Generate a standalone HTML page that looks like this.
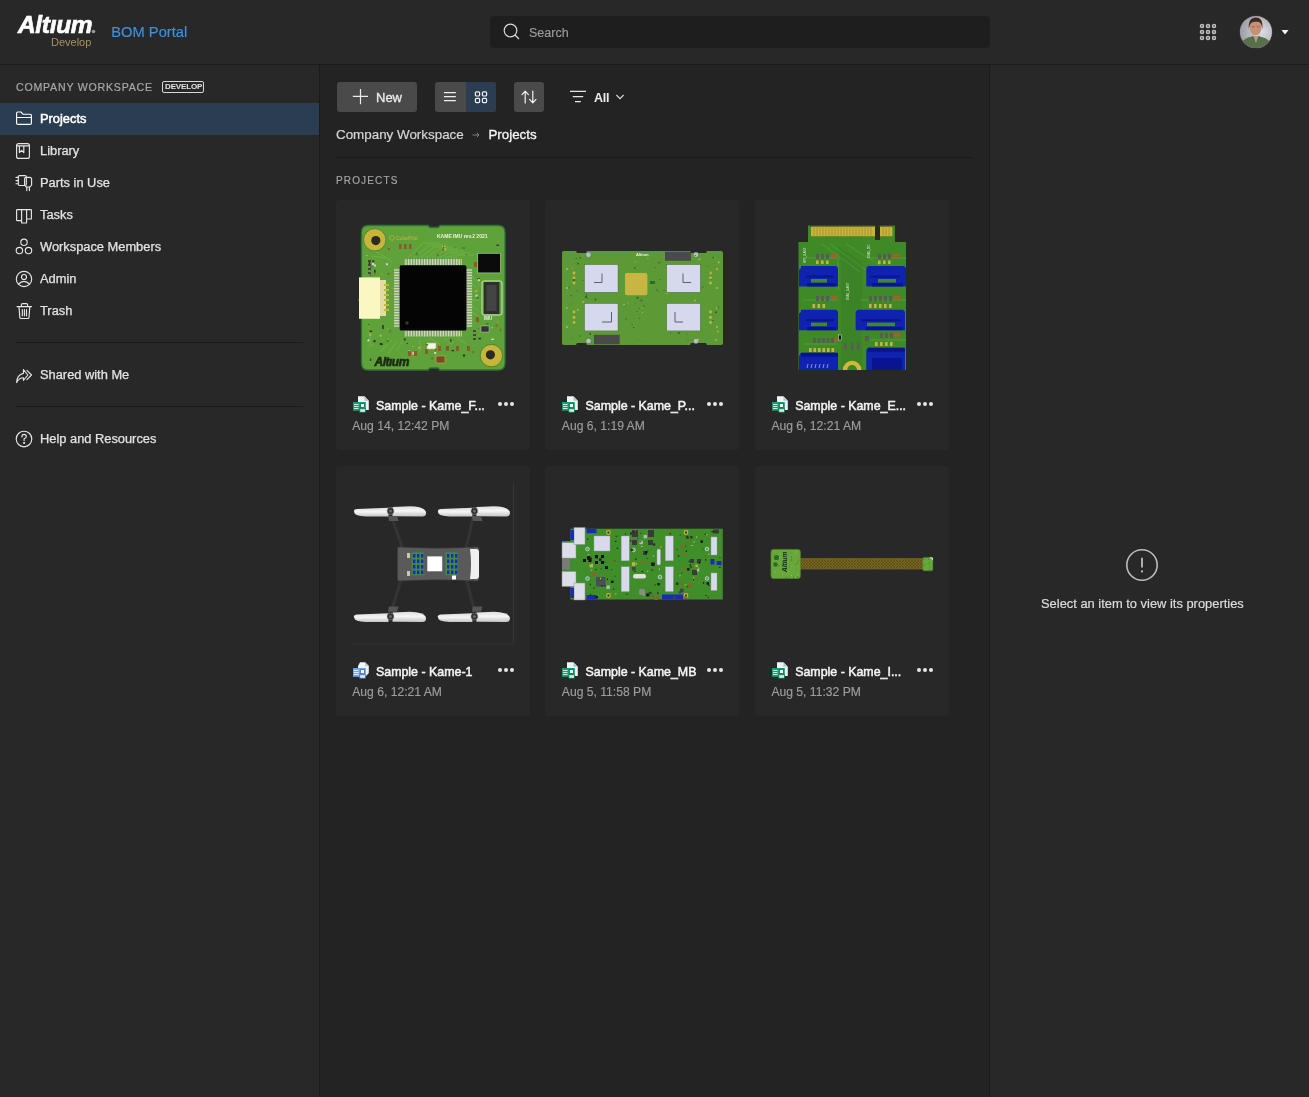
<!DOCTYPE html>
<html><head><meta charset="utf-8">
<style>
*{box-sizing:border-box;margin:0;padding:0}
html,body{width:1309px;height:1097px;overflow:hidden;background:#232323;font-family:"Liberation Sans",sans-serif;color:#e6e6e6}
.a{position:absolute}
body{will-change:transform}
.t{position:absolute;white-space:nowrap;line-height:1}
#hdr{left:0;top:0;width:1309px;height:64px;background:#282828}
#hline{left:0;top:64px;width:1309px;height:1px;background:#1b1b1b}
#side{left:0;top:65px;width:319px;height:1032px;background:#282828}
#sline{left:319px;top:65px;width:1px;height:1032px;background:#1b1b1b}
#main{left:320px;top:65px;width:669px;height:1032px;background:#232323}
#rline{left:989px;top:65px;width:1px;height:1032px;background:#1b1b1b}
#right{left:990px;top:65px;width:319px;height:1032px;background:#282828}
.nav{font-size:12.85px;color:#e4e4e4;left:40px;-webkit-text-stroke:0.25px #e4e4e4}
.ico{position:absolute;left:16px}
.card{position:absolute;width:194px;height:250px;background:#282828;border-radius:4px}
.ct{position:absolute;left:40.4px;font-size:12.4px;font-weight:400;color:#f4f4f4;-webkit-text-stroke:0.5px #f4f4f4;line-height:1;white-space:nowrap}
.cd{position:absolute;left:16.6px;font-size:12.15px;color:#9d9d9d;-webkit-text-stroke:0.15px #9d9d9d;line-height:1;white-space:nowrap}
</style></head><body>
<div class="a" id="hdr"></div>
<div class="a" id="hline"></div>
<div class="a" id="side"></div>
<div class="a" id="sline"></div>
<div class="a" id="main"></div>
<div class="a" id="rline"></div>
<div class="a" id="right"></div>

<!-- HEADER -->
<div class="t" style="left:17.5px;top:13.2px;font-size:24px;font-weight:700;font-style:italic;color:#fff;letter-spacing:-0.3px;-webkit-text-stroke:0.7px #fff;transform-origin:0 0;transform:scaleX(1.02)">Altıum</div>
<svg class="a" style="left:91px;top:29px" width="5" height="5" viewBox="0 0 5 5"><circle cx="2.5" cy="2.5" r="1.8" fill="#9a9a9a"/></svg>
<div class="t" style="left:51px;top:37px;font-size:11px;color:#a89262">Develop</div>
<div class="t" style="left:111.3px;top:24.8px;font-size:14.7px;color:#3f90e0;-webkit-text-stroke:0.15px #3f90e0">BOM Portal</div>
<div class="a" style="left:490px;top:16px;width:500px;height:32px;background:#1e1e1e;border-radius:4px"></div>
<svg class="a" style="left:500px;top:21px" width="22" height="22" viewBox="0 0 22 22"><circle cx="10.5" cy="9.5" r="6.3" fill="none" stroke="#d8d8d8" stroke-width="1.2"/><line x1="15" y1="14" x2="19" y2="18" stroke="#d8d8d8" stroke-width="1.3"/></svg>
<div class="t" style="left:529px;top:26.8px;font-size:12.5px;color:#9c9c9c;-webkit-text-stroke:0.15px #9c9c9c">Search</div>


<svg class="a" style="left:1198px;top:22px" width="20" height="20" viewBox="0 0 20 20">
<g fill="#7c7c7c" stroke="#c6c6c6" stroke-width="1.1">
<circle cx="4" cy="4" r="1.7"/><circle cx="10" cy="4" r="1.7"/><circle cx="16" cy="4" r="1.7"/>
<circle cx="4" cy="10" r="1.7"/><circle cx="10" cy="10" r="1.7"/><circle cx="16" cy="10" r="1.7"/>
<circle cx="4" cy="16" r="1.7"/><circle cx="10" cy="16" r="1.7"/><circle cx="16" cy="16" r="1.7"/>
</g></svg>
<svg class="a" style="left:1239px;top:15px" width="34" height="34" viewBox="0 0 34 34">
<defs><radialGradient id="avbg" cx="0.68" cy="0.5" r="0.6"><stop offset="0" stop-color="#dcdee4"/><stop offset="1" stop-color="#9ea2aa"/></radialGradient>
<clipPath id="avc"><circle cx="17" cy="17" r="16.1"/></clipPath></defs>
<g clip-path="url(#avc)">
<rect width="34" height="34" fill="url(#avbg)"/>
<path d="M0 31 C3 25 8 22.5 13 21.5 H20.5 C26 22.5 31 25 34 31 V34 H0 Z" fill="#56704a"/>
<path d="M13.5 21 H19.8 L17 28.5 Z" fill="#b89a84"/>
<path d="M12.8 21.5 L17 29 L14.5 21.5 Z M20.8 21.5 L17 29 L19.4 21.5 Z" fill="#4a6240"/>
<ellipse cx="16.6" cy="12.6" rx="6" ry="7.6" fill="#c98f74"/>
<path d="M9.8 14 C9.2 6 12 2.6 16.8 2.6 C21.4 2.6 24 5.6 23.4 14 C22.8 10.5 22 8 20.5 7.2 C18 6.6 14.5 6.8 12.5 7.8 C11 9 10.4 11 9.8 14 Z" fill="#3a2c24"/>
<path d="M12.8 11.8 H15.6 M17.8 11.8 H20.6" stroke="#7a5444" stroke-width="0.8"/>
</g>
<circle cx="17" cy="17" r="16.1" fill="none" stroke="#c06058" stroke-width="0.5" stroke-dasharray="1 1" opacity="0.8"/>
</svg>
<svg class="a" style="left:1281px;top:29px" width="8" height="7" viewBox="0 0 8 7"><path d="M0.5 1 L7.5 1 L4 5.5 Z" fill="#f4f4f4"/></svg>


<!-- SIDEBAR -->
<div class="t" style="left:16px;top:82.4px;font-size:10.6px;color:#a8a8a8;letter-spacing:0.78px;-webkit-text-stroke:0.2px #a8a8a8">COMPANY WORKSPACE</div>
<div class="a" style="left:162px;top:81px;width:42px;height:12px;border:1px solid #d8d8d8;border-radius:2px"></div>
<div class="t" style="left:165px;top:83.1px;font-size:8px;font-weight:700;color:#e4e4e4;letter-spacing:-0.15px">DEVELOP</div>
<div class="a" style="left:0;top:103px;width:319px;height:32px;background:#2b3d50"></div>
<svg class="a" style="left:0;top:0" width="40" height="460" viewBox="0 0 40 460" fill="none" stroke="#e6e6e6" stroke-width="1.15" stroke-linejoin="round" stroke-linecap="round">
<path d="M16.6 113.2 Q16.6 112 17.8 112 H21 L22.9 114.2 H30.2 Q31.4 114.2 31.4 115.4 V123.2 Q31.4 124.4 30.2 124.4 H17.8 Q16.6 124.4 16.6 123.2 Z M16.6 117.5 H31.4" stroke="#ffffff"/>
<rect x="16.6" y="143.6" width="12.8" height="14.8" rx="2"/>
<path d="M16.6 145.8 H29.4 M19.4 145.8 V152.6 L21.6 150.4 L23.8 152.6 V145.8"/>
<rect x="18.3" y="175.6" width="8" height="9.9" rx="1.2"/>
<path d="M16 177.4 H18.3 M16 180.6 H18.3 M16 183.7 H18.3"/>
<path d="M26 177.3 H29.6 Q31.6 177.3 31.6 179.3 V185 L30 187 H26.2 L24.6 185 V178.8 Q24.6 177.3 26 177.3 Z" />
<path d="M26.8 187 V190.6 M29.4 187 V190.6"/>
<path d="M17.2 209.6 H30.8 Q31.4 209.6 31.4 210.2 V218.4 Q31.4 219 30.8 219 H26.6 M16.6 210.2 Q16.6 209.6 17.2 209.6 M16.6 210.2 V220 Q16.6 220.6 17.2 220.6 H21.4 M21.6 209.6 V222.4 Q21.6 223 22.2 223 H26 Q26.6 223 26.6 222.4 V209.6"/>
<circle cx="24" cy="242.3" r="3.2"/>
<circle cx="19.4" cy="250.5" r="3.2"/>
<circle cx="28.5" cy="250.5" r="3.2"/>
<circle cx="24" cy="279" r="7.7"/>
<circle cx="24" cy="277" r="2.5"/>
<path d="M18.6 284 Q21 281.3 24 281.3 Q27 281.3 29.4 284"/>
<path d="M17 306.6 H31.6 M21.4 306.6 V304.8 Q21.4 303.6 22.6 303.6 H26.4 Q27.6 303.6 27.6 304.8 V306.6 M19 306.6 L19.8 317.4 Q19.9 318.5 21 318.5 H27.8 Q28.9 318.5 29 317.4 L29.8 306.6 M22.3 309.6 V315.8 M24.4 309.6 V315.8 M26.5 309.6 V315.8"/>
<path d="M23.4 369.6 L27.9 375 L23.4 380.3 V377.7 Q19.2 377.5 16.6 382.6 Q17 374.8 23.4 373.4 Z" stroke-width="1.1"/>
<path d="M26.9 370.4 L31.5 375 L26.9 379.6" stroke-width="1.1"/>
<circle cx="24" cy="439" r="7.8"/>
<path d="M21.9 436.9 Q21.9 434.4 24.1 434.4 Q26.3 434.4 26.3 436.5 Q26.3 437.9 24.1 438.8 V440.6"/>
<circle cx="24.1" cy="443" r="0.5" fill="#e6e6e6"/>
</svg>
<div class="t nav" style="top:113.1px;color:#ffffff;-webkit-text-stroke:0.5px #ffffff">Projects</div>
<div class="t nav" style="top:144.9px">Library</div>
<div class="t nav" style="top:176.9px">Parts in Use</div>
<div class="t nav" style="top:208.9px">Tasks</div>
<div class="t nav" style="top:240.9px">Workspace Members</div>
<div class="t nav" style="top:272.9px">Admin</div>
<div class="t nav" style="top:304.9px">Trash</div>
<div class="a" style="left:16px;top:342px;width:287px;height:1px;background:#1b1b1b"></div>
<div class="t nav" style="top:368.9px">Shared with Me</div>
<div class="a" style="left:16px;top:406px;width:287px;height:1px;background:#1b1b1b"></div>
<div class="t nav" style="top:432.9px">Help and Resources</div>


<!-- TOOLBAR -->
<div class="a" style="left:337px;top:82px;width:80px;height:30px;background:#4a4a4a;border-radius:3px"></div>
<svg class="a" style="left:352px;top:88px" width="17" height="17" viewBox="0 0 17 17"><path d="M8.5 1 V16.2 M0.8 8.4 H16" stroke="#ececec" stroke-width="1.2" fill="none"/></svg>
<div class="t" style="left:376px;top:90.8px;font-size:13px;color:#ededed;-webkit-text-stroke:0.3px #ededed">New</div>
<div class="a" style="left:435px;top:82px;width:61px;height:30px;background:#4a4a4a;border-radius:3px;overflow:hidden"><div class="a" style="left:30.5px;top:0;width:30.5px;height:30px;background:#2b3d50"></div></div>
<svg class="a" style="left:435px;top:82px" width="61" height="30" viewBox="0 0 61 30" fill="none" stroke="#f0f0f0" stroke-width="1.2">
<path d="M9 10.6 H20.8 M9 14.6 H20.8 M9 18.6 H20.8"/>
<rect x="40.4" y="9.8" width="4.2" height="4.2" rx="1"/><rect x="47.4" y="9.8" width="4.2" height="4.2" rx="1"/>
<rect x="40.4" y="16.4" width="4.2" height="4.2" rx="1"/><rect x="47.4" y="16.4" width="4.2" height="4.2" rx="1"/>
</svg>
<div class="a" style="left:514px;top:82px;width:30px;height:30px;background:#4a4a4a;border-radius:3px"></div>
<svg class="a" style="left:514px;top:82px" width="30" height="30" viewBox="0 0 30 30" fill="none" stroke="#f2f2f2" stroke-width="1.2" stroke-linecap="round" stroke-linejoin="round">
<path d="M11.2 21 V9.4 M8 12.6 L11.2 9.2 L14.4 12.6"/>
<path d="M18.8 9 V20.6 M15.6 17.4 L18.8 20.8 L22 17.4"/>
</svg>
<svg class="a" style="left:568px;top:88px" width="20" height="16" viewBox="0 0 20 16" fill="none" stroke="#e6e6e6" stroke-width="1.2">
<path d="M2 3.4 H18 M4.8 8.6 H15.2 M7 13.6 H12.8"/>
</svg>
<div class="t" style="left:594px;top:92px;font-size:12.5px;font-weight:700;color:#eeeeee;letter-spacing:-0.3px">All</div>
<svg class="a" style="left:614px;top:92px" width="12" height="10" viewBox="0 0 12 10" fill="none" stroke="#dedede" stroke-width="1.1"><path d="M2.4 3 L6 6.6 L9.6 3"/></svg>

<!-- BREADCRUMB -->
<div class="t" style="left:336px;top:128px;font-size:13.4px;color:#d6d6d6;-webkit-text-stroke:0.2px #d6d6d6">Company Workspace</div>
<svg class="a" style="left:471px;top:131px" width="10" height="8" viewBox="0 0 10 8" fill="none" stroke="#8a8a8a" stroke-width="0.9"><path d="M1.5 4 H8 M5.8 1.8 L8 4 L5.8 6.2"/></svg>
<div class="t" style="left:488.5px;top:128px;font-size:13.3px;color:#f4f4f4;-webkit-text-stroke:0.35px #f4f4f4">Projects</div>
<div class="a" style="left:336px;top:157px;width:637px;height:1px;background:#1b1b1b"></div>
<div class="t" style="left:336px;top:175.9px;font-size:10px;color:#a3a3a3;letter-spacing:1.15px;-webkit-text-stroke:0.2px #a3a3a3">PROJECTS</div>

<!-- RIGHT PANEL -->
<svg class="a" style="left:1125px;top:548px" width="34" height="34" viewBox="0 0 34 34" fill="none" stroke="#bdbdbd" stroke-width="1.6"><circle cx="17" cy="17" r="15.2"/><path d="M17 9.8 V19.4" stroke-width="1.8"/><circle cx="17" cy="23.4" r="1.1" fill="#bdbdbd" stroke="none"/></svg>
<div class="t" style="left:1041px;top:598.2px;font-size:12.9px;color:#dcdcdc;-webkit-text-stroke:0.2px #dcdcdc">Select an item to view its properties</div>


<!-- CARDS -->
<div class="card" style="left:335.6px;top:200px"><div class="ct" style="top:199.9px">Sample - Kame_F...</div><div class="cd" style="top:219.6px">Aug 14, 12:42 PM</div></div>
<svg class="a" style="left:352.7px;top:396px" width="17" height="17" viewBox="0 0 17 17">
<path d="M5 0.3 H11.4 L15.8 4.7 V14 H5 Z" fill="#eef6fc"/><path d="M11.4 0.3 L15.8 4.7 H11.4 Z" fill="#b0c4d6"/>
<rect x="0" y="6" width="12.8" height="8.8" fill="#10a070"/>
<path d="M1 8.5 H5.6 M1 10.5 H5.6 M1 12.5 H5.6" stroke="#ffffff" stroke-width="0.8"/>
<rect x="7.4" y="7.6" width="4" height="3.8" fill="#fff4f8" stroke="#06704a" stroke-width="0.8"/>
<rect x="6.8" y="12.8" width="5.6" height="3.4" fill="#cfeee0" stroke="#06704a" stroke-width="0.7"/>
</svg>
<svg class="a" style="left:496.00px;top:400px" width="20" height="8" viewBox="0 0 20 8" fill="#e6e6e6"><circle cx="4" cy="4" r="2.05"/><circle cx="10" cy="4" r="2.05"/><circle cx="16" cy="4" r="2.05"/></svg>
<div class="card" style="left:545.2px;top:200px"><div class="ct" style="top:199.9px">Sample - Kame_P...</div><div class="cd" style="top:219.6px">Aug 6, 1:19 AM</div></div>
<svg class="a" style="left:561.7px;top:396px" width="17" height="17" viewBox="0 0 17 17">
<path d="M5 0.3 H11.4 L15.8 4.7 V14 H5 Z" fill="#eef6fc"/><path d="M11.4 0.3 L15.8 4.7 H11.4 Z" fill="#b0c4d6"/>
<rect x="0" y="6" width="12.8" height="8.8" fill="#10a070"/>
<path d="M1 8.5 H5.6 M1 10.5 H5.6 M1 12.5 H5.6" stroke="#ffffff" stroke-width="0.8"/>
<rect x="7.4" y="7.6" width="4" height="3.8" fill="#fff4f8" stroke="#06704a" stroke-width="0.8"/>
<rect x="6.8" y="12.8" width="5.6" height="3.4" fill="#cfeee0" stroke="#06704a" stroke-width="0.7"/>
</svg>
<svg class="a" style="left:705.33px;top:400px" width="20" height="8" viewBox="0 0 20 8" fill="#e6e6e6"><circle cx="4" cy="4" r="2.05"/><circle cx="10" cy="4" r="2.05"/><circle cx="16" cy="4" r="2.05"/></svg>
<div class="card" style="left:754.8px;top:200px"><div class="ct" style="top:199.9px">Sample - Kame_E...</div><div class="cd" style="top:219.6px">Aug 6, 12:21 AM</div></div>
<svg class="a" style="left:771.7px;top:396px" width="17" height="17" viewBox="0 0 17 17">
<path d="M5 0.3 H11.4 L15.8 4.7 V14 H5 Z" fill="#eef6fc"/><path d="M11.4 0.3 L15.8 4.7 H11.4 Z" fill="#b0c4d6"/>
<rect x="0" y="6" width="12.8" height="8.8" fill="#10a070"/>
<path d="M1 8.5 H5.6 M1 10.5 H5.6 M1 12.5 H5.6" stroke="#ffffff" stroke-width="0.8"/>
<rect x="7.4" y="7.6" width="4" height="3.8" fill="#fff4f8" stroke="#06704a" stroke-width="0.8"/>
<rect x="6.8" y="12.8" width="5.6" height="3.4" fill="#cfeee0" stroke="#06704a" stroke-width="0.7"/>
</svg>
<svg class="a" style="left:914.67px;top:400px" width="20" height="8" viewBox="0 0 20 8" fill="#e6e6e6"><circle cx="4" cy="4" r="2.05"/><circle cx="10" cy="4" r="2.05"/><circle cx="16" cy="4" r="2.05"/></svg>
<div class="card" style="left:335.6px;top:466px"><div class="ct" style="top:199.9px">Sample - Kame-1</div><div class="cd" style="top:219.6px">Aug 6, 12:21 AM</div></div>
<svg class="a" style="left:352.7px;top:662px" width="17" height="17" viewBox="0 0 17 17">
<path d="M7 0.3 H12 L15.8 4 V11 L12.6 14.5 H5 V4 Z" fill="#eef6fc"/><path d="M12 0.3 L15.8 4 L12 4.5 Z" fill="#c0d0e0"/>
<rect x="0" y="6" width="12.8" height="8.8" fill="#68a8e6"/>
<path d="M1 8.5 H5.6 M1 10.5 H5.6 M1 12.5 H5.6" stroke="#ffffff" stroke-width="0.8"/>
<rect x="7.4" y="7.6" width="4" height="3.8" fill="#fff4f8" stroke="#3a70b8" stroke-width="0.8"/>
<rect x="6.8" y="12.8" width="5.6" height="3.4" fill="#dde8f8" stroke="#3a70b8" stroke-width="0.7"/>
</svg>
<svg class="a" style="left:496.00px;top:666px" width="20" height="8" viewBox="0 0 20 8" fill="#e6e6e6"><circle cx="4" cy="4" r="2.05"/><circle cx="10" cy="4" r="2.05"/><circle cx="16" cy="4" r="2.05"/></svg>
<div class="card" style="left:545.2px;top:466px"><div class="ct" style="top:199.9px">Sample - Kame_MB</div><div class="cd" style="top:219.6px">Aug 5, 11:58 PM</div></div>
<svg class="a" style="left:561.7px;top:662px" width="17" height="17" viewBox="0 0 17 17">
<path d="M5 0.3 H11.4 L15.8 4.7 V14 H5 Z" fill="#eef6fc"/><path d="M11.4 0.3 L15.8 4.7 H11.4 Z" fill="#b0c4d6"/>
<rect x="0" y="6" width="12.8" height="8.8" fill="#10a070"/>
<path d="M1 8.5 H5.6 M1 10.5 H5.6 M1 12.5 H5.6" stroke="#ffffff" stroke-width="0.8"/>
<rect x="7.4" y="7.6" width="4" height="3.8" fill="#fff4f8" stroke="#06704a" stroke-width="0.8"/>
<rect x="6.8" y="12.8" width="5.6" height="3.4" fill="#cfeee0" stroke="#06704a" stroke-width="0.7"/>
</svg>
<svg class="a" style="left:705.33px;top:666px" width="20" height="8" viewBox="0 0 20 8" fill="#e6e6e6"><circle cx="4" cy="4" r="2.05"/><circle cx="10" cy="4" r="2.05"/><circle cx="16" cy="4" r="2.05"/></svg>
<div class="card" style="left:754.8px;top:466px"><div class="ct" style="top:199.9px">Sample - Kame_I...</div><div class="cd" style="top:219.6px">Aug 5, 11:32 PM</div></div>
<svg class="a" style="left:771.7px;top:662px" width="17" height="17" viewBox="0 0 17 17">
<path d="M5 0.3 H11.4 L15.8 4.7 V14 H5 Z" fill="#eef6fc"/><path d="M11.4 0.3 L15.8 4.7 H11.4 Z" fill="#b0c4d6"/>
<rect x="0" y="6" width="12.8" height="8.8" fill="#10a070"/>
<path d="M1 8.5 H5.6 M1 10.5 H5.6 M1 12.5 H5.6" stroke="#ffffff" stroke-width="0.8"/>
<rect x="7.4" y="7.6" width="4" height="3.8" fill="#fff4f8" stroke="#06704a" stroke-width="0.8"/>
<rect x="6.8" y="12.8" width="5.6" height="3.4" fill="#cfeee0" stroke="#06704a" stroke-width="0.7"/>
</svg>
<svg class="a" style="left:914.67px;top:666px" width="20" height="8" viewBox="0 0 20 8" fill="#e6e6e6"><circle cx="4" cy="4" r="2.05"/><circle cx="10" cy="4" r="2.05"/><circle cx="16" cy="4" r="2.05"/></svg>
<svg class="a" style="left:0;top:0" width="1309" height="1097" viewBox="0 0 1309 1097">
<!-- PCB 1: Kame_F IMU board -->
<g>
<path d="M368 225.5 H428 L430 227.5 H438 L440 225.5 H498 Q505 225.5 505 232.5 V363 Q505 370 498 370 H440 L438 368 H430 L428 370 H368 Q361.5 370 361.5 363 V232.5 Q361.5 225.5 368 225.5 Z" fill="#5fa23a" stroke="#2f7434" stroke-width="1.3"/>
<g stroke="#78b84c" stroke-width="0.7" fill="none" opacity="0.9">
<path d="M408 258 L423 243 H440 M414 258 L429 245 H446 M420 258 L434 247 H452 M426 258 L439 249 H458 M432 258 L444 251 H464 M438 258 L449 253 H470 M444 258 L454 255 H474 M450 258 L458 257"/>
<path d="M472 276 L480 286 M472 282 L478 290 M472 300 H481 M472 306 L478 310 M472 312 L480 318"/>
<path d="M392 340 L380 352 M398 340 L388 354 M404 338 L396 352 M420 340 V352 M430 338 L440 344 M444 338 L452 344 M458 338 L466 344"/>
<path d="M368 326 Q372 334 370 346 M366 300 H358 M372 256 L386 258 M370 250 Q380 252 392 262"/>
</g>
<circle cx="374.8" cy="239.8" r="11.2" fill="#c8b63a" stroke="#3a7a34" stroke-width="0.8"/>
<circle cx="375.8" cy="240.6" r="4.6" fill="#2a2a22"/>
<circle cx="491.4" cy="355.6" r="11.2" fill="#c8b63a" stroke="#3a7a34" stroke-width="0.8"/>
<circle cx="490.4" cy="354.8" r="4.6" fill="#2a2a22"/>
<polygon points="392,235.5 394.2,236.7 394.2,239.3 392,240.5 389.8,239.3 389.8,236.7" fill="none" stroke="#c8b63a" stroke-width="0.6"/><text x="396" y="240" font-size="5" fill="#c8b63a" font-family="Liberation Sans">CubePilot</text>
<text x="437" y="238" font-size="5" fill="#f0f0e0" font-family="Liberation Sans" font-weight="700">KAME IMU rev.2 2021</text>
<defs>
<pattern id="pinv" width="1.6" height="6" patternUnits="userSpaceOnUse"><rect width="1.6" height="6" fill="#5a9a38"/><rect width="0.9" height="6" fill="#dcdccc"/></pattern>
<pattern id="pinh" width="6" height="1.6" patternUnits="userSpaceOnUse"><rect width="6" height="1.6" fill="#5a9a38"/><rect width="6" height="0.9" fill="#dcdccc"/></pattern>
</defs>
<rect x="404" y="259" width="58" height="6.2" fill="url(#pinv)"/>
<rect x="404" y="330.5" width="58" height="6" fill="url(#pinv)"/>
<rect x="394" y="268.6" width="5.7" height="58.4" fill="url(#pinh)"/>
<rect x="466.4" y="268.6" width="5.7" height="58.4" fill="url(#pinh)"/>
<rect x="399.7" y="265.2" width="66.7" height="65.3" rx="1.5" fill="#040404"/>
<circle cx="407" cy="323" r="1.8" fill="#333"/>
<rect x="359" y="277.4" width="21" height="41.4" fill="#fbf7c2"/>
<rect x="380" y="280" width="6" height="36" fill="#e4dca4"/>
<g fill="#c9b23a"><rect x="384" y="284" width="5" height="2"/><rect x="384" y="289" width="5" height="2"/><rect x="384" y="294" width="5" height="2"/><rect x="384" y="299" width="5" height="2"/><rect x="384" y="304" width="5" height="2"/><rect x="384" y="309" width="5" height="2"/></g>
<rect x="477.8" y="253.3" width="22.6" height="19.6" fill="#0b0b0b" stroke="#d8e8c8" stroke-width="0.5"/>
<rect x="482" y="281" width="20" height="34" rx="2" fill="none" stroke="#e8f0d8" stroke-width="0.8"/>
<rect x="483.8" y="282" width="15.6" height="32" fill="#2e2e2e"/>
<rect x="486.5" y="285" width="10" height="26" fill="#444"/>
<text x="484" y="320" font-size="4.5" fill="#f0f0e0" font-family="Liberation Sans" font-weight="700">IMU</text>
<rect x="481" y="326" width="8" height="6" fill="#333" stroke="#ddd" stroke-width="0.4"/>
<g fill="#8a5a2a"><rect x="399" y="244" width="2.5" height="5"/><rect x="404" y="244" width="2.5" height="5"/><rect x="409" y="244" width="2.5" height="5"/><rect x="425" y="349" width="3" height="5"/><rect x="438" y="346" width="3" height="5"/><rect x="446" y="346" width="3" height="5"/><rect x="456" y="346" width="3" height="5"/><rect x="467" y="346" width="3" height="5"/><rect x="408" y="351" width="3" height="5"/><rect x="414" y="351" width="3" height="5"/><rect x="476" y="317" width="3" height="5"/><rect x="474" y="262" width="3" height="5"/></g>
<g fill="#444"><rect x="368" y="260" width="3" height="2"/><rect x="368" y="264" width="3" height="2"/><rect x="368" y="268" width="3" height="2"/><rect x="368" y="272" width="3" height="2"/><rect x="473" y="330" width="3" height="2"/><rect x="473" y="334" width="3" height="2"/><rect x="473" y="338" width="3" height="2"/><rect x="382" y="325" width="2" height="4"/></g>
<rect x="427" y="343" width="9" height="6" fill="#f4f4f4" stroke="#c9b23a" stroke-width="0.6"/>
<rect x="436" y="356" width="9" height="7" fill="#7a4a28" stroke="#c9b23a" stroke-width="0.6"/>
<text x="374.5" y="366" font-size="12" font-style="italic" font-weight="700" fill="#1c2a14" stroke="#1c2a14" stroke-width="0.6" font-family="Liberation Sans" letter-spacing="-0.5">Altıum</text>
</g>
<!-- PCB 1b: texture -->
<g>
<rect x="478.4" y="337.9" width="2.6" height="1.4" fill="#2a2a2a"/><rect x="372.0" y="263.0" width="2" height="2" fill="#d8d8c8"/><rect x="442.5" y="245.6" width="2.6" height="1.4" fill="#d8d8c8"/><rect x="386.5" y="340.5" width="2.6" height="1.4" fill="#3a7a30"/><rect x="496.3" y="244.6" width="2.6" height="1.4" fill="#3a3a3a"/><rect x="406.8" y="343.0" width="1" height="1" fill="#2a2a2a"/><rect x="367.4" y="339.3" width="2" height="2" fill="#d8d8c8"/><rect x="443.1" y="245.1" width="1.4" height="2.6" fill="#2a2a2a"/><rect x="381.1" y="273.8" width="1" height="1" fill="#c9b23a"/><rect x="434.2" y="352.0" width="2" height="2" fill="#d8d8c8"/><rect x="379.6" y="334.6" width="2" height="2" fill="#c9b23a"/><rect x="369.9" y="358.4" width="1.4" height="2.6" fill="#3a3a3a"/><rect x="369.3" y="333.6" width="2" height="2" fill="#c9b23a"/><rect x="497.2" y="321.2" width="1" height="1" fill="#c9b23a"/><rect x="450.1" y="339.3" width="1.4" height="2.6" fill="#3a3a3a"/><rect x="380.2" y="343.5" width="2.6" height="1.4" fill="#2a2a2a"/><rect x="373.5" y="340.2" width="2" height="2" fill="#2a2a2a"/><rect x="444.3" y="248.2" width="2" height="2" fill="#c9b23a"/><rect x="443.4" y="245.4" width="2" height="2" fill="#c9b23a"/><rect x="412.3" y="346.0" width="1" height="1" fill="#c9b23a"/><rect x="391.8" y="287.8" width="1" height="1" fill="#c9b23a"/><rect x="388.2" y="338.4" width="1" height="1" fill="#c9b23a"/><rect x="462.3" y="247.3" width="2.6" height="1.4" fill="#3a7a30"/><rect x="372.3" y="260.2" width="2" height="2" fill="#3a3a3a"/><rect x="475.5" y="294.7" width="2" height="2" fill="#d8d8c8"/><rect x="412.4" y="352.1" width="1.4" height="2.6" fill="#d8d8c8"/><rect x="408.9" y="350.1" width="1" height="1" fill="#d8d8c8"/><rect x="368.2" y="323.9" width="1" height="1" fill="#3a3a3a"/><rect x="404.6" y="338.6" width="1" height="1" fill="#8a5a2a"/><rect x="491.3" y="338.6" width="2.6" height="1.4" fill="#d8d8c8"/><rect x="435.0" y="348.5" width="1.4" height="2.6" fill="#8a5a2a"/><rect x="369.9" y="274.5" width="1" height="1" fill="#2a2a2a"/><rect x="367.0" y="338.2" width="1" height="1" fill="#3a7a30"/><rect x="417.9" y="347.1" width="2.6" height="1.4" fill="#c9b23a"/><rect x="477.9" y="328.0" width="1" height="1" fill="#3a7a30"/><rect x="403.7" y="338.5" width="2" height="2" fill="#3a3a3a"/><rect x="387.3" y="328.1" width="1" height="1" fill="#c9b23a"/><rect x="374.2" y="271.8" width="1.4" height="2.6" fill="#8a5a2a"/><rect x="454.6" y="247.1" width="1" height="1" fill="#8a5a2a"/><rect x="499.8" y="328.9" width="1.4" height="2.6" fill="#8a5a2a"/><rect x="374.1" y="269.8" width="1.4" height="2.6" fill="#2a2a2a"/><rect x="416.2" y="252.7" width="1.4" height="2.6" fill="#3a7a30"/><rect x="366.3" y="255.1" width="1" height="1" fill="#d8d8c8"/><rect x="477.4" y="278.3" width="2.6" height="1.4" fill="#3a3a3a"/><rect x="389.2" y="330.3" width="2" height="2" fill="#8a5a2a"/><rect x="442.4" y="248.3" width="1.4" height="2.6" fill="#3a7a30"/><rect x="466.2" y="254.1" width="1" height="1" fill="#3a3a3a"/><rect x="477.8" y="279.1" width="2" height="2" fill="#d8d8c8"/><rect x="452.5" y="341.3" width="1" height="1" fill="#c9b23a"/><rect x="370.0" y="266.5" width="2.6" height="1.4" fill="#8a5a2a"/><rect x="431.2" y="357.4" width="2" height="2" fill="#8a5a2a"/><rect x="385.9" y="263.2" width="2" height="2" fill="#d8d8c8"/><rect x="379.9" y="343.0" width="2" height="2" fill="#2a2a2a"/><rect x="491.6" y="327.2" width="1" height="1" fill="#d8d8c8"/><rect x="369.5" y="330.5" width="2.6" height="1.4" fill="#2a2a2a"/><rect x="387.1" y="273.1" width="2.6" height="1.4" fill="#8a5a2a"/><rect x="387.9" y="248.0" width="2" height="2" fill="#8a5a2a"/><rect x="371.5" y="344.8" width="1" height="1" fill="#c9b23a"/><rect x="451.5" y="349.9" width="2.6" height="1.4" fill="#3a3a3a"/><rect x="436.7" y="254.2" width="2" height="2" fill="#8a5a2a"/><rect x="445.8" y="347.7" width="2.6" height="1.4" fill="#3a7a30"/><rect x="463.0" y="354.5" width="2" height="2" fill="#2a2a2a"/><rect x="425.6" y="344.0" width="2.6" height="1.4" fill="#3a7a30"/><rect x="495.6" y="324.6" width="2" height="2" fill="#8a5a2a"/><rect x="472.5" y="350.8" width="1.4" height="2.6" fill="#8a5a2a"/><rect x="486.0" y="323.1" width="2.6" height="1.4" fill="#3a7a30"/><rect x="368.8" y="261.4" width="1.4" height="2.6" fill="#2a2a2a"/><rect x="474.6" y="290.3" width="2.6" height="1.4" fill="#c9b23a"/><rect x="373.9" y="264.5" width="2" height="2" fill="#d8d8c8"/><rect x="476.6" y="296.8" width="2" height="2" fill="#3a7a30"/>
</g>
<!-- PCB 2: Kame_P -->
<g>
<path d="M564 251 H576 L577 253 H586 L587 251 H690 L691 253 H706 L707 251 H721 Q723 251 723 253 V343 Q723 345 721 345 H707 L706 343 H691 L690 345 H587 L586 343 H577 L576 345 H564 Q562 345 562 343 V253 Q562 251 564 251 Z" fill="#5c9a36"/>
<g fill="#c9b440"><circle cx="574" cy="273" r="1.4"/><circle cx="574" cy="278" r="1.4"/><circle cx="574" cy="283" r="1.4"/><circle cx="574" cy="312" r="1.4"/><circle cx="574" cy="317.5" r="1.4"/><circle cx="574" cy="322.5" r="1.4"/>
<circle cx="710.5" cy="273" r="1.4"/><circle cx="710.5" cy="278" r="1.4"/><circle cx="710.5" cy="283" r="1.4"/><circle cx="710.5" cy="312" r="1.4"/><circle cx="710.5" cy="317.5" r="1.4"/><circle cx="710.5" cy="322.5" r="1.4"/>
<circle cx="567" cy="269" r="1"/><circle cx="567" cy="288" r="1"/><circle cx="567" cy="308" r="1"/><circle cx="567" cy="327" r="1"/><circle cx="717" cy="269" r="1"/><circle cx="717" cy="288" r="1"/><circle cx="717" cy="308" r="1"/><circle cx="717" cy="327" r="1"/></g>
<g fill="#d6d8ee" stroke="#4a6a3a" stroke-width="0.4">
<rect x="584.6" y="264.7" width="33.4" height="27.5"/><rect x="666.8" y="264.7" width="33.4" height="27.5"/>
<rect x="584.6" y="303.6" width="33.4" height="27.3"/><rect x="666.8" y="303.6" width="33.4" height="27.3"/>
</g>
<g stroke="#50545c" stroke-width="0.9" fill="none">
<path d="M602 273.5 V282.5 H594 M683 273.5 V282.5 H691 M611.5 312 V322 H602 M675 312 V322 H683"/>
</g>
<rect x="625" y="273" width="22.4" height="22.2" rx="2" fill="#c9b542"/>
<rect x="665" y="251.7" width="26" height="9.1" fill="#4a4a4a"/>
<rect x="594" y="334.8" width="25.7" height="9.5" fill="#4a4a4a"/>
<g fill="#b8c0b8" stroke="#3a5a3a" stroke-width="0.5"><circle cx="588.5" cy="254.8" r="2.8"/><circle cx="696" cy="254.8" r="2.8"/><circle cx="588.5" cy="341" r="2.8"/><circle cx="696" cy="341" r="2.8"/></g>
<g fill="#2a6a2a"><rect x="650" y="281" width="5" height="3"/></g>
<text x="636" y="255.5" font-size="4" fill="#eef" font-family="Liberation Sans" font-weight="700">Altium</text>
</g>
<!-- PCB 2b: texture -->
<g>
<rect x="634.8" y="303.1" width="0.8" height="1.2" fill="#4a7a3a"/><rect x="643.2" y="305.5" width="1.2" height="0.8" fill="#2a4a20"/><rect x="638.3" y="307.8" width="1.2" height="0.8" fill="#3a6a2a"/><rect x="633.9" y="267.2" width="1.6" height="1.6" fill="#3a6a2a"/><rect x="656.5" y="289.1" width="0.8" height="1.2" fill="#2a4a20"/><rect x="575.6" y="258.1" width="1.2" height="0.8" fill="#2a4a20"/><rect x="570.6" y="294.9" width="0.8" height="1.2" fill="#2a4a20"/><rect x="694.0" y="299.6" width="1.6" height="1.6" fill="#c9b440"/><rect x="642.0" y="312.0" width="0.8" height="1.2" fill="#c9b440"/><rect x="627.8" y="302.4" width="1.2" height="0.8" fill="#c9b440"/><rect x="570.5" y="303.4" width="1.2" height="0.8" fill="#4a7a3a"/><rect x="582.4" y="280.0" width="1.2" height="0.8" fill="#3a6a2a"/><rect x="694.8" y="255.0" width="1.2" height="0.8" fill="#3a6a2a"/><rect x="637.4" y="339.3" width="0.8" height="1.2" fill="#4a7a3a"/><rect x="577.1" y="309.1" width="1.6" height="1.6" fill="#c9b440"/><rect x="712.5" y="320.2" width="1.2" height="0.8" fill="#2f5a22"/><rect x="636.7" y="296.9" width="1.6" height="1.6" fill="#2a4a20"/><rect x="594.6" y="298.8" width="1.6" height="1.6" fill="#2f5a22"/><rect x="697.4" y="338.8" width="1.6" height="1.6" fill="#c9b440"/><rect x="717.7" y="256.7" width="1.2" height="0.8" fill="#4a7a3a"/><rect x="717.4" y="306.8" width="1.6" height="1.6" fill="#3a6a2a"/><rect x="572.4" y="267.6" width="0.8" height="1.2" fill="#c9b440"/><rect x="567.5" y="307.5" width="0.8" height="1.2" fill="#4a7a3a"/><rect x="577.2" y="262.8" width="1.6" height="1.6" fill="#2f5a22"/><rect x="568.4" y="286.7" width="1.6" height="1.6" fill="#4a7a3a"/><rect x="589.4" y="333.1" width="1.6" height="1.6" fill="#2f5a22"/><rect x="708.9" y="271.9" width="0.8" height="1.2" fill="#4a7a3a"/><rect x="657.7" y="291.2" width="1.2" height="0.8" fill="#3a6a2a"/><rect x="571.9" y="337.8" width="1.2" height="0.8" fill="#4a7a3a"/><rect x="640.6" y="299.7" width="1.6" height="1.6" fill="#3a6a2a"/><rect x="585.2" y="296.2" width="1.6" height="1.6" fill="#2a4a20"/><rect x="659.4" y="279.1" width="1.2" height="0.8" fill="#3a6a2a"/><rect x="576.5" y="290.4" width="1.2" height="0.8" fill="#3a6a2a"/><rect x="573.1" y="279.2" width="1.6" height="1.6" fill="#2a4a20"/><rect x="713.9" y="262.9" width="1.2" height="0.8" fill="#4a7a3a"/><rect x="715.0" y="311.5" width="1.6" height="1.6" fill="#2a4a20"/><rect x="654.8" y="267.1" width="1.2" height="0.8" fill="#3a6a2a"/><rect x="712.3" y="256.8" width="1.6" height="1.6" fill="#3a6a2a"/><rect x="639.3" y="317.8" width="0.8" height="1.2" fill="#2f5a22"/><rect x="717.9" y="261.5" width="1.6" height="1.6" fill="#c9b440"/><rect x="678.0" y="332.4" width="1.6" height="1.6" fill="#2f5a22"/><rect x="686.6" y="333.7" width="0.8" height="1.2" fill="#3a6a2a"/><rect x="670.1" y="332.5" width="0.8" height="1.2" fill="#3a6a2a"/><rect x="658.5" y="261.9" width="1.6" height="1.6" fill="#3a6a2a"/><rect x="717.0" y="330.7" width="1.6" height="1.6" fill="#c9b440"/><rect x="625.0" y="318.2" width="1.6" height="1.6" fill="#4a7a3a"/><rect x="633.0" y="327.1" width="1.2" height="0.8" fill="#2a4a20"/><rect x="579.3" y="256.9" width="1.6" height="1.6" fill="#3a6a2a"/><rect x="641.6" y="307.8" width="0.8" height="1.2" fill="#c9b440"/><rect x="702.3" y="286.6" width="1.2" height="0.8" fill="#2a4a20"/><rect x="666.3" y="293.0" width="1.2" height="0.8" fill="#c9b440"/><rect x="631.5" y="324.3" width="1.2" height="0.8" fill="#2f5a22"/><rect x="624.4" y="305.1" width="0.8" height="1.2" fill="#2f5a22"/><rect x="586.7" y="297.7" width="1.2" height="0.8" fill="#3a6a2a"/><rect x="710.4" y="278.8" width="1.2" height="0.8" fill="#3a6a2a"/><rect x="634.8" y="261.4" width="1.2" height="0.8" fill="#c9b440"/><rect x="698.7" y="258.6" width="1.6" height="1.6" fill="#c9b440"/><rect x="652.7" y="281.6" width="1.6" height="1.6" fill="#3a6a2a"/><rect x="663.4" y="289.8" width="1.2" height="0.8" fill="#3a6a2a"/><rect x="687.1" y="339.6" width="1.2" height="0.8" fill="#4a7a3a"/><rect x="582.6" y="301.0" width="1.6" height="1.6" fill="#c9b440"/><rect x="711.7" y="313.9" width="1.2" height="0.8" fill="#4a7a3a"/><rect x="647.3" y="258.1" width="1.2" height="0.8" fill="#c9b440"/><rect x="642.1" y="340.7" width="1.2" height="0.8" fill="#4a7a3a"/><rect x="579.3" y="335.2" width="1.6" height="1.6" fill="#4a7a3a"/><rect x="585.7" y="294.0" width="1.6" height="1.6" fill="#3a6a2a"/><rect x="623.3" y="303.9" width="1.6" height="1.6" fill="#c9b440"/><rect x="636.5" y="311.0" width="1.2" height="0.8" fill="#3a6a2a"/><rect x="706.5" y="265.6" width="1.2" height="0.8" fill="#4a7a3a"/><rect x="715.0" y="339.1" width="1.6" height="1.6" fill="#c9b440"/>
</g>
<!-- PCB 3: Kame_E M.2 board -->
<g>
<path d="M808 225.5 H875 V236 H880 V225.5 H895 V242 H906 V370 H798.5 V242 H808 Z" fill="#3f8a27"/>
<rect x="810" y="225.5" width="66" height="1.4" fill="#3a3a30"/>
<rect x="879" y="225.5" width="14" height="1.4" fill="#3a3a30"/>
<rect x="811" y="226.6" width="64" height="9.6" fill="#c8b43c"/>
<rect x="880" y="226.6" width="12.4" height="9.6" fill="#c8b43c"/>
<g stroke="#8a7a20" stroke-width="0.5"><path d="M814 226.4 V236 M817 226.4 V236 M820 226.4 V236 M823 226.4 V236 M826 226.4 V236 M829 226.4 V236 M832 226.4 V236 M835 226.4 V236 M838 226.4 V236 M841 226.4 V236 M844 226.4 V236 M847 226.4 V236 M850 226.4 V236 M853 226.4 V236 M856 226.4 V236 M859 226.4 V236 M862 226.4 V236 M865 226.4 V236 M868 226.4 V236 M871 226.4 V236 M883 226.4 V236 M886 226.4 V236 M889 226.4 V236"/></g>
<rect x="875" y="236" width="5" height="4" fill="#2a2a2a"/>
<path d="M838 246 L862 262 V370 H841 V262 Z" fill="#3c8226"/>
<g stroke="#6aa848" stroke-width="0.5" fill="none"><path d="M822 244 L860 272 M830 244 L866 270 M846 244 L884 268 M803 258 H838 V290 M867 258 H906 M803 300 H838 M860 300 H906 M803 344 H838 M867 340 H906"/></g>
<g fill="#0f22b0">
<path d="M801 266 H836 L838 268 V286.4 H799 V270 L801 268 Z"/>
<path d="M868 266 H904 L906 268 V286.4 H866.3 V268 Z"/>
<path d="M801 309.7 H836 L838 311.7 V330.2 H799 V313.7 L801 311.7 Z"/>
<path d="M858 309.7 H903 L905 311.7 V330.2 H855.7 V311.7 Z"/>
<path d="M801 352.8 H836 L838 354.8 V370 H799 V356 Z"/>
<path d="M868 347.8 H903 L905 349.8 V370 H866.3 V349.8 Z"/>
</g>
<g fill="#0a1490">
<rect x="806" y="275.5" width="28" height="2"/><rect x="807" y="283.2" width="29" height="3.2"/>
<rect x="870" y="275.5" width="30" height="2"/><rect x="872" y="283.2" width="31" height="3.2"/>
<rect x="806" y="319.2" width="28" height="2"/><rect x="807" y="327" width="29" height="3.2"/>
<rect x="861" y="319.2" width="40" height="2"/><rect x="866" y="327" width="37" height="3.2"/>
<rect x="801" y="352.8" width="37" height="4"/>
<rect x="868" y="347.8" width="37" height="4"/><rect x="872" y="358" width="30" height="12"/>
</g>
<g fill="#3f8a27"><rect x="811" y="279" width="16" height="3.6"/><rect x="878" y="279" width="18" height="3.6"/><rect x="811" y="322.6" width="16" height="3.6"/><rect x="867" y="322.6" width="28" height="3.6"/></g>
<g stroke="#e0e0f0" stroke-width="0.6"><path d="M807 368 L808 364 M811 368 L812 364 M815 368 L816 364 M819 368 L820 364 M823 368 L824 364 M827 368 L828 364"/></g>
<g fill="#5a5a5a"><rect x="816" y="254" width="3" height="5"/><rect x="821" y="254" width="3" height="5"/><rect x="826" y="254" width="3" height="5"/><rect x="878" y="254" width="3" height="5"/><rect x="883" y="254" width="3" height="5"/><rect x="888" y="254" width="3" height="5"/>
<rect x="816" y="296" width="3" height="5"/><rect x="821" y="296" width="3" height="5"/><rect x="826" y="296" width="3" height="5"/><rect x="869" y="296" width="3" height="5"/><rect x="874" y="296" width="3" height="5"/><rect x="879" y="296" width="3" height="5"/><rect x="884" y="296" width="3" height="5"/><rect x="889" y="296" width="3" height="5"/>
<rect x="813" y="338" width="3" height="5"/><rect x="817.5" y="338" width="3" height="5"/><rect x="822" y="338" width="3" height="5"/><rect x="826.5" y="338" width="3" height="5"/><rect x="831" y="338" width="3" height="5"/><rect x="880" y="333" width="3" height="5"/><rect x="885" y="333" width="3" height="5"/><rect x="890" y="333" width="3" height="5"/>
<rect x="844" y="343" width="2.4" height="7"/><rect x="851" y="343" width="2.4" height="7"/><rect x="857" y="343" width="2.4" height="7"/><rect x="865" y="336" width="4" height="5"/></g>
<g fill="#b45a2a"><rect x="831" y="254" width="2.6" height="4"/><rect x="834.5" y="254" width="2.6" height="4"/><rect x="893" y="254" width="2.6" height="4"/><rect x="896.5" y="254" width="2.6" height="4"/><rect x="831" y="296" width="2.6" height="4"/><rect x="834.5" y="296" width="2.6" height="4"/><rect x="894" y="296" width="2.6" height="4"/><rect x="897.5" y="296" width="2.6" height="4"/><rect x="894" y="333" width="2.6" height="4"/><rect x="897.5" y="333" width="2.6" height="4"/><rect x="834" y="338" width="2.6" height="4"/></g>
<g fill="#c8b43c"><rect x="816" y="260.5" width="2.6" height="3.6"/><rect x="821" y="260.5" width="2.6" height="3.6"/><rect x="826" y="260.5" width="2.6" height="3.6"/><rect x="878" y="260.5" width="2.6" height="3.6"/><rect x="883" y="260.5" width="2.6" height="3.6"/><rect x="888" y="260.5" width="2.6" height="3.6"/>
<rect x="812.5" y="304" width="2.6" height="4"/><rect x="817.5" y="304" width="2.6" height="4"/><rect x="822.5" y="304" width="2.6" height="4"/><rect x="869" y="304" width="2.6" height="4"/><rect x="874" y="304" width="2.6" height="4"/><rect x="879" y="304" width="2.6" height="4"/><rect x="884" y="304" width="2.6" height="4"/><rect x="889" y="304" width="2.6" height="4"/>
<rect x="809" y="348" width="2.6" height="4"/><rect x="813.5" y="348" width="2.6" height="4"/><rect x="818" y="348" width="2.6" height="4"/><rect x="822.5" y="348" width="2.6" height="4"/><rect x="827" y="348" width="2.6" height="4"/><rect x="831.5" y="348" width="2.6" height="4"/><rect x="875" y="342" width="2.6" height="4"/><rect x="880" y="342" width="2.6" height="4"/><rect x="885" y="342" width="2.6" height="4"/><rect x="890" y="342" width="2.6" height="4"/></g>
<path d="M842.8 370 A9.3 9.3 0 0 1 861.4 370 H857 A4.9 4.9 0 0 0 847.2 370 Z" fill="#d2b83a"/>
<rect x="838.5" y="335" width="3" height="5" fill="#111" stroke="#eee" stroke-width="0.5"/>
<g fill="#dfe8d8" font-family="Liberation Sans" font-size="3.2"><text transform="translate(806,263) rotate(-90)">RPI_UART</text><text transform="translate(870,258) rotate(-90)">EMU_DC</text><text transform="translate(849,300) rotate(-90)">EMU_UART</text></g>
</g>
<!-- PCB 4: drone Kame-1 -->
<g>
<path d="M513.5 483 V644 H352" fill="none" stroke="#353535" stroke-width="1"/>
<defs>
<linearGradient id="prop" x1="0" y1="0" x2="0" y2="1"><stop offset="0" stop-color="#dcdcdc"/><stop offset="0.45" stop-color="#f6f6f6"/><stop offset="1" stop-color="#c4c4c4"/></linearGradient>
</defs>
<g stroke="#343434" stroke-width="3" stroke-linecap="round">
<path d="M392 518 L402.5 548 M473 518 L466 548 M401 580 L392 609 M466.5 580 L474 609"/>
</g>
<g fill="url(#prop)">
<g transform="translate(0.0,0.0)">
<path d="M354 510.8 Q354 509.2 357 509 L388.5 507.8 V516.4 L372 516.6 Q358 516.6 355 514 Q354 512.6 354 510.8 Z"/>
<path d="M392.5 507 L410 506.2 Q423.5 506.6 425.8 511.4 Q427 516.4 422 516.4 L392.5 516.2 Z"/>
<path d="M388 516 H397 L398.5 521 H389 Z" fill="#555"/>
</g><g transform="translate(83.9,0.0)">
<path d="M354 510.8 Q354 509.2 357 509 L388.5 507.8 V516.4 L372 516.6 Q358 516.6 355 514 Q354 512.6 354 510.8 Z"/>
<path d="M392.5 507 L410 506.2 Q423.5 506.6 425.8 511.4 Q427 516.4 422 516.4 L392.5 516.2 Z"/>
<path d="M388 516 H397 L398.5 521 H389 Z" fill="#555"/>
</g><g transform="translate(0.0,105.5)">
<path d="M354 510.8 Q354 509.2 357 509 L388.5 507.8 V516.4 L372 516.6 Q358 516.6 355 514 Q354 512.6 354 510.8 Z"/>
<path d="M392.5 507 L410 506.2 Q423.5 506.6 425.8 511.4 Q427 516.4 422 516.4 L392.5 516.2 Z"/>
<path d="M388 506.2 H397 L398.5 501 H389 Z" fill="#555"/>
</g><g transform="translate(83.9,105.5)">
<path d="M354 510.8 Q354 509.2 357 509 L388.5 507.8 V516.4 L372 516.6 Q358 516.6 355 514 Q354 512.6 354 510.8 Z"/>
<path d="M392.5 507 L410 506.2 Q423.5 506.6 425.8 511.4 Q427 516.4 422 516.4 L392.5 516.2 Z"/>
<path d="M388 506.2 H397 L398.5 501 H389 Z" fill="#555"/>
</g>
</g>
<g fill="#303030" stroke="#a0a0a0" stroke-width="0.8" stroke-dasharray="1.2 0.8">
<circle cx="390.5" cy="511" r="3.4"/><circle cx="474.4" cy="511" r="3.4"/><circle cx="390.5" cy="616.5" r="3.4"/><circle cx="474.4" cy="616.5" r="3.4"/>
</g>
<g fill="#6a6a6a"><circle cx="390.5" cy="511" r="1.5"/><circle cx="474.4" cy="511" r="1.5"/><circle cx="390.5" cy="616.5" r="1.5"/><circle cx="474.4" cy="616.5" r="1.5"/></g>
<path d="M399 547 Q438 549.5 477 547 Q479 547 479 549 V579 Q479 581 477 581 Q438 578.5 399 581 Q397.5 581 397.5 579 V549 Q397.5 547 399 547 Z" fill="#5a5a5a" stroke="#3a3a3a" stroke-width="0.6"/>
<rect x="411.6" y="552.5" width="12.6" height="22.7" fill="#3f8a4a"/>
<rect x="445.4" y="552.5" width="12.5" height="22.7" fill="#3f8a4a"/>
<g fill="#1a2ab8"><rect x="413" y="554" width="2.4" height="3.6"/><rect x="417" y="554" width="2.4" height="3.6"/><rect x="421" y="554" width="2.4" height="3.6"/><rect x="413" y="559.5" width="2.4" height="3.6"/><rect x="417" y="559.5" width="2.4" height="3.6"/><rect x="421" y="559.5" width="2.4" height="3.6"/><rect x="413" y="565" width="2.4" height="3.6"/><rect x="417" y="565" width="2.4" height="3.6"/><rect x="421" y="565" width="2.4" height="3.6"/><rect x="413" y="570.5" width="2.4" height="3.6"/><rect x="417" y="570.5" width="2.4" height="3.6"/><rect x="421" y="570.5" width="2.4" height="3.6"/>
<rect x="447" y="554" width="2.4" height="3.6"/><rect x="451" y="554" width="2.4" height="3.6"/><rect x="455" y="554" width="2.4" height="3.6"/><rect x="447" y="559.5" width="2.4" height="3.6"/><rect x="451" y="559.5" width="2.4" height="3.6"/><rect x="455" y="559.5" width="2.4" height="3.6"/><rect x="447" y="565" width="2.4" height="3.6"/><rect x="451" y="565" width="2.4" height="3.6"/><rect x="455" y="565" width="2.4" height="3.6"/><rect x="447" y="570.5" width="2.4" height="3.6"/><rect x="451" y="570.5" width="2.4" height="3.6"/><rect x="455" y="570.5" width="2.4" height="3.6"/></g>
<rect x="427.3" y="556.4" width="14.9" height="14.9" fill="#ffffff"/>
<rect x="452" y="575.5" width="4" height="4" fill="#ffffff"/>
<path d="M470 549 H476 Q479 549 479 552 V576 Q479 579 476 579 H470 Q472 564 470 549 Z" fill="#f0f0f0"/>
<g fill="#c8c8b0"><rect x="407" y="553" width="3" height="5"/><rect x="407" y="571" width="3" height="5"/></g>
</g>
<!-- PCB 5: Kame_MB -->
<g>
<rect x="570.4" y="528.7" width="152.4" height="70.8" fill="#3f8e2a"/>
<rect x="562" y="541" width="10" height="46" fill="#3f8e2a"/>
<g fill="#dcdde8" stroke="#8a8c98" stroke-width="0.5">
<rect x="562" y="542.7" width="14" height="15.4"/><rect x="562" y="571.5" width="14" height="14.7"/>
<rect x="574" y="527.5" width="11" height="17"/><rect x="574" y="583" width="11" height="17"/>
</g>
<rect x="562" y="559" width="8" height="10.5" fill="#7a7a7a"/>
<g fill="#1a2ab8"><rect x="586.5" y="528.7" width="10" height="4.5"/><rect x="586.5" y="595" width="10" height="4.5"/><rect x="662" y="594.5" width="21" height="5"/><rect x="710.5" y="559" width="4" height="5.5"/><rect x="716.5" y="561" width="5" height="4"/><rect x="570.4" y="530" width="3.6" height="10"/><rect x="570.4" y="588" width="3.6" height="10"/></g>
<g fill="#d8d9ea" stroke="#9a9ca8" stroke-width="0.4">
<rect x="621.2" y="536" width="8" height="24.8"/><rect x="621.2" y="566.8" width="8" height="24.7"/>
<rect x="665.3" y="536" width="8" height="24.8"/><rect x="665.3" y="566.8" width="8" height="24.7"/>
<rect x="594" y="536" width="16" height="15"/>
<rect x="711" y="537" width="6" height="18"/><rect x="711" y="573" width="6" height="17.5"/>
<rect x="657" y="549" width="3.5" height="16" rx="1.5"/>
</g>
<rect x="633" y="574" width="13" height="4.5" rx="2.2" fill="#e0e0e0"/>
<g fill="#111"><rect x="595" y="555" width="3" height="3"/><rect x="601" y="555" width="3" height="3"/><rect x="595" y="561" width="3" height="3"/><rect x="601" y="561" width="3" height="3"/><rect x="583" y="559" width="3" height="3"/><rect x="588.5" y="559" width="3" height="3"/><rect x="605" y="566" width="3" height="3"/></g>
<g fill="#3a3a3a"><rect x="596" y="577" width="9.5" height="9.5" fill="#4a4e58"/><rect x="632" y="530" width="6" height="7"/><rect x="648" y="530" width="6" height="7"/><rect x="632" y="540" width="5" height="5"/><rect x="648" y="540" width="5" height="5"/><rect x="643" y="551" width="4" height="4"/><rect x="690" y="559" width="4" height="4"/><rect x="697" y="559" width="4" height="4"/><rect x="692" y="570" width="5" height="5"/><rect x="713" y="529.5" width="6" height="4"/></g>
<circle cx="642" cy="592" r="3.2" fill="#8a8a8a"/>
<g fill="#2a4a20" stroke="#d0b830" stroke-width="1.2"><circle cx="608.5" cy="532.5" r="1.8"/><circle cx="686" cy="532.5" r="1.8"/><circle cx="608.5" cy="595.5" r="1.8"/><circle cx="686" cy="595.5" r="1.8"/></g>
<g fill="#5a9a88" stroke="#c8d0c8" stroke-width="0.9"><circle cx="587.5" cy="549" r="1.8"/><circle cx="587.5" cy="578.5" r="1.8"/><circle cx="633.5" cy="550" r="1.8"/><circle cx="660" cy="577" r="1.8"/><circle cx="707" cy="549" r="1.8"/><circle cx="707" cy="578.5" r="1.8"/></g>
<g fill="#a05a28"><rect x="640" y="562" width="3" height="1.5"/><rect x="646" y="562" width="3" height="1.5"/><rect x="612" y="562" width="3" height="1.5"/><rect x="684" y="554" width="3" height="1.5"/><rect x="684" y="568" width="3" height="1.5"/><rect x="680" y="583" width="3" height="1.5"/></g>
</g>
<!-- PCB 5b: texture -->
<g>
<rect x="630.1" y="540.1" width="1.0" height="1.6" fill="#1a1a1a"/><rect x="696.2" y="536.3" width="1.0" height="1.6" fill="#c9b440"/><rect x="615.6" y="535.8" width="1.6" height="1.0" fill="#2e2e2e"/><rect x="599.1" y="558.4" width="2.4" height="2.4" fill="#1a1a1a"/><rect x="595.2" y="569.2" width="1.6" height="1.0" fill="#2e2e2e"/><rect x="593.2" y="587.5" width="1.6" height="1.0" fill="#2e2e2e"/><rect x="658.9" y="568.3" width="1.0" height="1.6" fill="#b0b8b0"/><rect x="611.0" y="569.0" width="1.0" height="1.6" fill="#444"/>
<rect x="600.0" y="577.7" width="1.0" height="1.6" fill="#c9b440"/><rect x="614.4" y="575.6" width="1.6" height="1.0" fill="#444"/><rect x="648.9" y="591.9" width="1.6" height="1.0" fill="#2e2e2e"/><rect x="692.7" y="576.8" width="1.6" height="1.0" fill="#c9b440"/><rect x="646.7" y="570.8" width="1.6" height="1.0" fill="#c9b440"/><rect x="642.6" y="580.7" width="1.6" height="1.0" fill="#9a5a2a"/><rect x="643.1" y="594.5" width="1.6" height="1.0" fill="#c9b440"/><rect x="679.5" y="569.8" width="1.0" height="1.6" fill="#9a5a2a"/>
<rect x="679.7" y="534.4" width="1.0" height="1.6" fill="#444"/><rect x="673.1" y="596.5" width="2.4" height="2.4" fill="#444"/><rect x="682.3" y="589.4" width="1.6" height="1.0" fill="#9a5a2a"/><rect x="634.3" y="570.9" width="1.6" height="1.0" fill="#2e2e2e"/><rect x="689.2" y="538.7" width="1.6" height="1.0" fill="#9a5a2a"/><rect x="640.4" y="548.6" width="1.6" height="1.0" fill="#9a5a2a"/><rect x="701.9" y="548.7" width="1.6" height="1.0" fill="#444"/><rect x="677.8" y="555.5" width="1.6" height="1.0" fill="#1a1a1a"/>
<rect x="651.5" y="569.5" width="1.6" height="1.0" fill="#1a1a1a"/><rect x="606.4" y="565.8" width="1.0" height="1.6" fill="#444"/><rect x="706.6" y="582.3" width="2.4" height="2.4" fill="#111"/><rect x="661.4" y="556.7" width="1.6" height="1.0" fill="#9a5a2a"/><rect x="614.8" y="540.9" width="1.6" height="1.0" fill="#1a1a1a"/><rect x="600.6" y="568.0" width="1.0" height="1.6" fill="#444"/><rect x="651.9" y="595.5" width="1.6" height="1.0" fill="#444"/><rect x="590.1" y="593.7" width="1.0" height="1.6" fill="#2e2e2e"/>
<rect x="678.8" y="591.2" width="2.4" height="2.4" fill="#444"/><rect x="689.7" y="565.7" width="2.4" height="2.4" fill="#444"/><rect x="687.9" y="543.1" width="1.6" height="1.0" fill="#9a5a2a"/><rect x="685.4" y="545.2" width="1.0" height="1.6" fill="#444"/><rect x="684.2" y="596.3" width="2.4" height="2.4" fill="#9a5a2a"/><rect x="646.5" y="592.8" width="3.5" height="3.5" fill="#444"/><rect x="631.9" y="562.3" width="3.5" height="3.5" fill="#c9b440"/><rect x="698.8" y="562.1" width="1.0" height="1.6" fill="#111"/>
<rect x="705.2" y="559.1" width="1.0" height="1.6" fill="#1a1a1a"/><rect x="693.5" y="595.1" width="1.6" height="1.0" fill="#9a5a2a"/><rect x="685.9" y="535.7" width="1.6" height="1.0" fill="#2e2e2e"/><rect x="590.7" y="569.6" width="1.6" height="1.0" fill="#b0b8b0"/><rect x="606.4" y="585.4" width="3.5" height="3.5" fill="#b0b8b0"/><rect x="589.8" y="583.6" width="1.0" height="1.6" fill="#1a1a1a"/><rect x="657.0" y="592.6" width="1.6" height="1.0" fill="#111"/><rect x="612.9" y="588.6" width="1.6" height="1.0" fill="#2e2e2e"/>
<rect x="708.0" y="553.7" width="1.6" height="1.0" fill="#c9b440"/><rect x="695.4" y="564.6" width="2.4" height="2.4" fill="#c9b440"/><rect x="703.1" y="582.0" width="1.0" height="1.6" fill="#111"/><rect x="693.3" y="541.5" width="1.6" height="1.0" fill="#b0b8b0"/><rect x="704.5" y="533.8" width="1.6" height="1.0" fill="#1a1a1a"/><rect x="689.7" y="564.0" width="1.0" height="1.6" fill="#111"/><rect x="705.9" y="534.2" width="1.6" height="1.0" fill="#c9b440"/><rect x="654.6" y="584.1" width="1.0" height="1.6" fill="#2e2e2e"/>
<rect x="680.0" y="588.7" width="3.5" height="3.5" fill="#444"/><rect x="646.5" y="557.9" width="1.6" height="1.0" fill="#444"/><rect x="676.0" y="582.5" width="2.4" height="2.4" fill="#2e2e2e"/><rect x="686.3" y="536.3" width="2.4" height="2.4" fill="#2e2e2e"/><rect x="718.7" y="585.8" width="1.6" height="1.0" fill="#9a5a2a"/><rect x="719.2" y="557.1" width="1.6" height="1.0" fill="#444"/><rect x="595.6" y="596.0" width="2.4" height="2.4" fill="#1a1a1a"/><rect x="611.1" y="580.6" width="2.4" height="2.4" fill="#111"/>
<rect x="708.2" y="584.9" width="1.6" height="1.0" fill="#2e2e2e"/><rect x="630.5" y="548.7" width="2.4" height="2.4" fill="#2e2e2e"/><rect x="643.6" y="534.9" width="3.5" height="3.5" fill="#b0b8b0"/><rect x="616.6" y="547.7" width="1.6" height="1.0" fill="#1a1a1a"/><rect x="632.1" y="567.1" width="3.5" height="3.5" fill="#444"/><rect x="669.7" y="532.9" width="1.0" height="1.6" fill="#1a1a1a"/><rect x="614.4" y="559.9" width="1.0" height="1.6" fill="#444"/><rect x="633.2" y="531.2" width="1.6" height="1.0" fill="#1a1a1a"/>
<rect x="589.5" y="563.9" width="3.5" height="3.5" fill="#c9b440"/><rect x="650.1" y="592.6" width="1.6" height="1.0" fill="#111"/><rect x="705.2" y="595.0" width="1.6" height="1.0" fill="#2e2e2e"/><rect x="681.0" y="572.6" width="1.6" height="1.0" fill="#444"/><rect x="594.4" y="574.6" width="1.6" height="1.0" fill="#c9b440"/><rect x="676.2" y="548.9" width="1.6" height="1.0" fill="#444"/><rect x="587.5" y="554.4" width="1.6" height="1.0" fill="#c9b440"/><rect x="630.0" y="532.3" width="2.4" height="2.4" fill="#2e2e2e"/>
<rect x="634.4" y="530.1" width="1.6" height="1.0" fill="#9a5a2a"/><rect x="690.2" y="536.1" width="2.4" height="2.4" fill="#2e2e2e"/><rect x="640.1" y="532.8" width="1.6" height="1.0" fill="#444"/><rect x="700.5" y="540.4" width="2.4" height="2.4" fill="#111"/><rect x="703.9" y="556.1" width="1.6" height="1.0" fill="#9a5a2a"/><rect x="606.9" y="578.5" width="1.0" height="1.6" fill="#1a1a1a"/><rect x="696.7" y="577.9" width="1.0" height="1.6" fill="#9a5a2a"/><rect x="684.6" y="584.4" width="1.6" height="1.0" fill="#c9b440"/>
<rect x="687.1" y="568.1" width="2.4" height="2.4" fill="#1a1a1a"/><rect x="696.9" y="569.1" width="2.4" height="2.4" fill="#b0b8b0"/><rect x="592.6" y="572.7" width="3.5" height="3.5" fill="#9a5a2a"/><rect x="698.2" y="567.4" width="1.0" height="1.6" fill="#b0b8b0"/><rect x="657.7" y="546.4" width="1.6" height="1.0" fill="#9a5a2a"/><rect x="693.1" y="580.1" width="1.0" height="1.6" fill="#c9b440"/><rect x="599.2" y="565.2" width="1.0" height="1.6" fill="#9a5a2a"/><rect x="684.0" y="543.7" width="1.0" height="1.6" fill="#9a5a2a"/>
<rect x="652.7" y="555.6" width="1.6" height="1.0" fill="#b0b8b0"/><rect x="625.2" y="533.1" width="1.0" height="1.6" fill="#2e2e2e"/><rect x="685.8" y="550.4" width="1.0" height="1.6" fill="#1a1a1a"/><rect x="651.2" y="562.5" width="3.5" height="3.5" fill="#1a1a1a"/><rect x="679.1" y="575.3" width="1.6" height="1.0" fill="#c9b440"/><rect x="719.1" y="566.8" width="1.6" height="1.0" fill="#1a1a1a"/><rect x="711.5" y="531.2" width="1.6" height="1.0" fill="#111"/><rect x="654.4" y="596.6" width="3.5" height="3.5" fill="#9a5a2a"/>
<rect x="614.9" y="593.4" width="1.6" height="1.0" fill="#c9b440"/><rect x="599.0" y="580.1" width="1.6" height="1.0" fill="#444"/><rect x="604.6" y="585.0" width="1.0" height="1.6" fill="#1a1a1a"/><rect x="680.5" y="545.5" width="2.4" height="2.4" fill="#9a5a2a"/><rect x="639.4" y="540.7" width="3.5" height="3.5" fill="#b0b8b0"/><rect x="647.0" y="550.2" width="1.6" height="1.0" fill="#444"/><rect x="637.0" y="538.1" width="1.6" height="1.0" fill="#444"/><rect x="686.8" y="586.2" width="1.6" height="1.0" fill="#2e2e2e"/>
<rect x="681.8" y="590.4" width="1.6" height="1.0" fill="#444"/><rect x="595.6" y="556.1" width="2.4" height="2.4" fill="#1a1a1a"/><rect x="635.0" y="558.7" width="1.6" height="1.0" fill="#1a1a1a"/><rect x="645.0" y="551.1" width="2.4" height="2.4" fill="#111"/><rect x="660.0" y="578.2" width="1.6" height="1.0" fill="#b0b8b0"/><rect x="641.6" y="571.2" width="1.6" height="1.0" fill="#111"/><rect x="603.9" y="561.6" width="1.6" height="1.0" fill="#444"/><rect x="641.0" y="546.0" width="1.6" height="1.0" fill="#b0b8b0"/>
<rect x="639.5" y="541.2" width="1.6" height="1.0" fill="#2e2e2e"/><rect x="653.6" y="584.4" width="1.0" height="1.6" fill="#9a5a2a"/><rect x="707.5" y="596.8" width="1.6" height="1.0" fill="#2e2e2e"/><rect x="659.9" y="546.4" width="1.6" height="1.0" fill="#c9b440"/><rect x="662.8" y="589.4" width="1.0" height="1.6" fill="#9a5a2a"/><rect x="657.4" y="583.0" width="2.4" height="2.4" fill="#1a1a1a"/><rect x="646.3" y="593.9" width="2.4" height="2.4" fill="#111"/><rect x="688.6" y="583.9" width="3.5" height="3.5" fill="#9a5a2a"/>
<rect x="587.0" y="556.2" width="3.5" height="3.5" fill="#111"/><rect x="691.2" y="545.0" width="1.6" height="1.0" fill="#b0b8b0"/><rect x="601.5" y="585.3" width="1.0" height="1.6" fill="#111"/><rect x="688.7" y="560.6" width="1.0" height="1.6" fill="#1a1a1a"/><rect x="587.2" y="538.4" width="1.0" height="1.6" fill="#1a1a1a"/><rect x="666.9" y="530.7" width="1.6" height="1.0" fill="#9a5a2a"/><rect x="590.9" y="557.6" width="1.0" height="1.6" fill="#1a1a1a"/><rect x="589.9" y="563.4" width="1.0" height="1.6" fill="#9a5a2a"/>
<rect x="636.2" y="563.0" width="1.0" height="1.6" fill="#b0b8b0"/><rect x="693.0" y="579.5" width="1.0" height="1.6" fill="#2e2e2e"/><rect x="652.9" y="543.4" width="2.4" height="2.4" fill="#2e2e2e"/><rect x="626.2" y="593.8" width="1.6" height="1.0" fill="#2e2e2e"/>
</g>
<!-- PCB 6: Kame_I flex -->
<g>
<defs><pattern id="hatch" width="3" height="3" patternUnits="userSpaceOnUse"><rect width="3" height="3" fill="#766622"/><path d="M0 0 L3 3 M3 0 L0 3" stroke="#54481a" stroke-width="0.55"/></pattern></defs>
<rect x="800" y="558" width="123.5" height="11.4" fill="url(#hatch)"/>
<rect x="771" y="549.4" width="29.4" height="29.1" rx="2.5" fill="#68a83a" stroke="#4a8a2a" stroke-width="0.7"/>
<rect x="922.8" y="557.4" width="10" height="13.3" rx="1.5" fill="#68a83a" stroke="#4a8a2a" stroke-width="0.5"/>
<rect x="778.7" y="565.1" width="0.9" height="0.9" fill="#3a6a22"/><rect x="796.3" y="563.3" width="0.9" height="0.9" fill="#4a8a2a"/><rect x="788.2" y="574.6" width="0.9" height="0.9" fill="#9ad06a"/><rect x="779.2" y="557.1" width="0.9" height="0.9" fill="#9ad06a"/><rect x="786.6" y="565.3" width="0.9" height="0.9" fill="#9ad06a"/><rect x="789.1" y="554.9" width="0.9" height="0.9" fill="#8ac85a"/><rect x="795.1" y="564.6" width="0.9" height="0.9" fill="#4a8a2a"/><rect x="790.0" y="552.7" width="0.9" height="0.9" fill="#4a8a2a"/><rect x="780.3" y="551.8" width="0.9" height="0.9" fill="#3a6a22"/><rect x="784.8" y="569.7" width="0.9" height="0.9" fill="#9ad06a"/><rect x="791.1" y="574.9" width="0.9" height="0.9" fill="#9ad06a"/><rect x="791.4" y="566.0" width="0.9" height="0.9" fill="#8ac85a"/><rect x="795.4" y="553.5" width="0.9" height="0.9" fill="#8ac85a"/><rect x="785.4" y="557.7" width="0.9" height="0.9" fill="#9ad06a"/><rect x="792.8" y="573.2" width="0.9" height="0.9" fill="#9ad06a"/><rect x="785.7" y="561.0" width="0.9" height="0.9" fill="#3a6a22"/><rect x="786.4" y="561.6" width="0.9" height="0.9" fill="#8ac85a"/><rect x="796.0" y="568.7" width="0.9" height="0.9" fill="#4a8a2a"/><rect x="794.8" y="576.8" width="0.9" height="0.9" fill="#8ac85a"/><rect x="790.7" y="559.5" width="0.9" height="0.9" fill="#4a8a2a"/><rect x="791.1" y="556.5" width="0.9" height="0.9" fill="#3a6a22"/><rect x="779.9" y="552.6" width="0.9" height="0.9" fill="#9ad06a"/><rect x="774.8" y="571.8" width="0.9" height="0.9" fill="#9ad06a"/><rect x="795.8" y="551.5" width="0.9" height="0.9" fill="#9ad06a"/><rect x="792.5" y="573.7" width="0.9" height="0.9" fill="#4a8a2a"/><rect x="788.2" y="570.8" width="0.9" height="0.9" fill="#9ad06a"/><rect x="791.2" y="559.6" width="0.9" height="0.9" fill="#3a6a22"/><rect x="785.6" y="577.0" width="0.9" height="0.9" fill="#3a6a22"/><rect x="772.7" y="553.8" width="0.9" height="0.9" fill="#4a8a2a"/><rect x="797.2" y="576.3" width="0.9" height="0.9" fill="#3a6a22"/><rect x="788.4" y="555.1" width="0.9" height="0.9" fill="#4a8a2a"/><rect x="798.0" y="559.8" width="0.9" height="0.9" fill="#3a6a22"/><rect x="797.4" y="574.3" width="0.9" height="0.9" fill="#9ad06a"/><rect x="782.3" y="573.6" width="0.9" height="0.9" fill="#9ad06a"/><rect x="789.2" y="566.5" width="0.9" height="0.9" fill="#4a8a2a"/><rect x="788.6" y="575.5" width="0.9" height="0.9" fill="#3a6a22"/><rect x="783.7" y="569.7" width="0.9" height="0.9" fill="#8ac85a"/><rect x="796.8" y="562.4" width="0.9" height="0.9" fill="#3a6a22"/><rect x="786.0" y="565.3" width="0.9" height="0.9" fill="#4a8a2a"/><rect x="793.0" y="576.7" width="0.9" height="0.9" fill="#3a6a22"/><rect x="923.7" y="565.3" width="0.8" height="0.8" fill="#3a6a22"/><rect x="928.6" y="559.2" width="0.8" height="0.8" fill="#3a6a22"/><rect x="928.5" y="563.6" width="0.8" height="0.8" fill="#3a6a22"/><rect x="928.9" y="562.4" width="0.8" height="0.8" fill="#3a6a22"/><rect x="929.2" y="566.6" width="0.8" height="0.8" fill="#3a6a22"/><rect x="923.7" y="559.2" width="0.8" height="0.8" fill="#3a6a22"/><rect x="928.9" y="569.1" width="0.8" height="0.8" fill="#3a6a22"/><rect x="925.5" y="563.5" width="0.8" height="0.8" fill="#3a6a22"/><path d="M930 557.8 H932.4 V560.2" stroke="#ffffff" stroke-width="0.8" fill="none"/>
<circle cx="776.5" cy="557.5" r="2.6" fill="#2a6a2a"/>
<circle cx="775.5" cy="564.5" r="2.3" fill="#2a6a2a"/>
<text transform="translate(787,572) rotate(-90)" font-size="6.5" font-style="italic" font-weight="700" fill="#1c2a14" font-family="Liberation Sans">Altium</text>
</g>

</svg>
</body></html>
